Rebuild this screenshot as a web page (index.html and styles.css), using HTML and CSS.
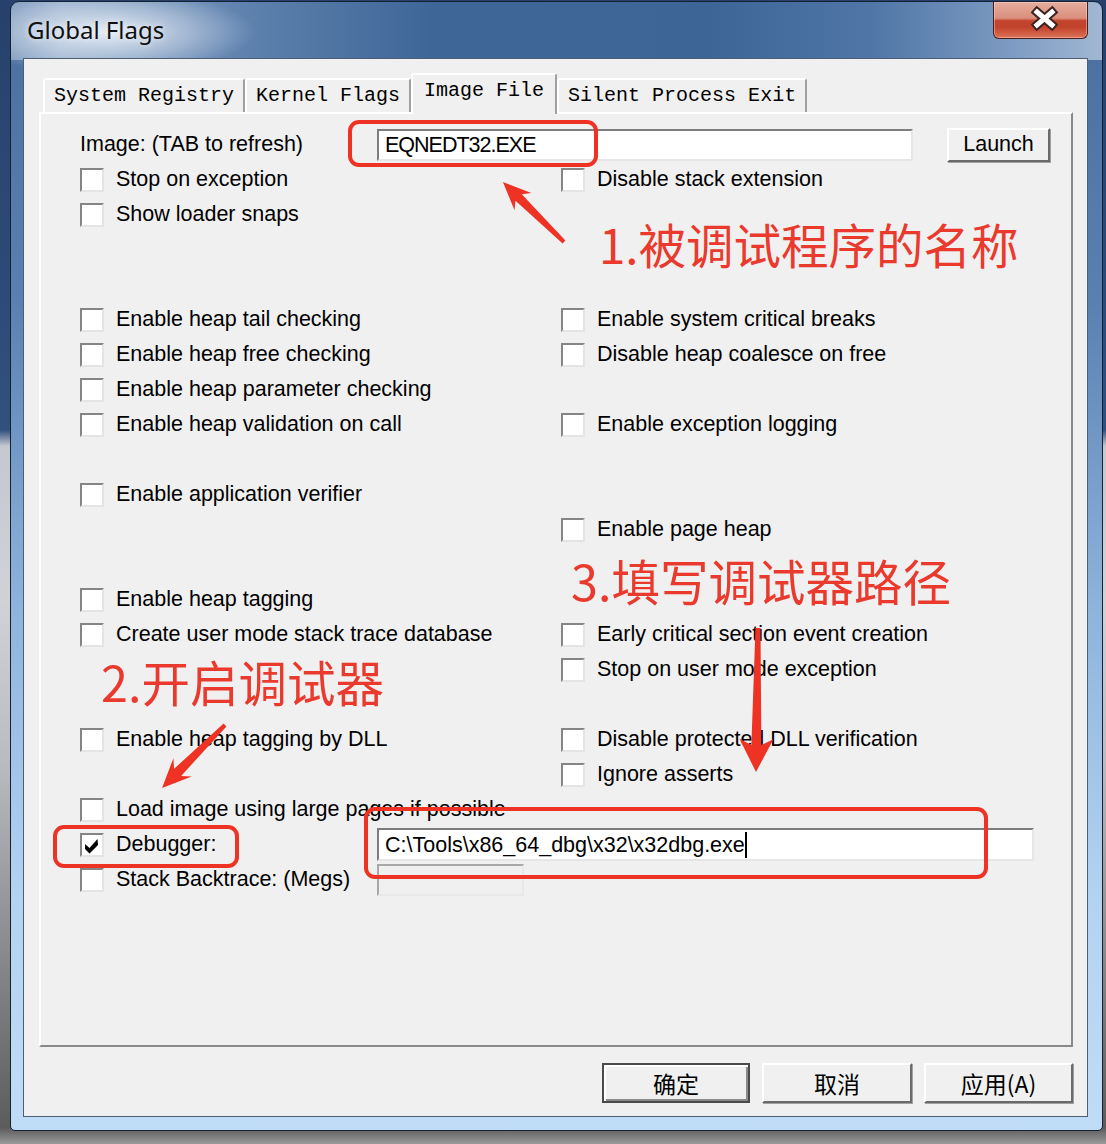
FILE: index.html
```html
<!DOCTYPE html>
<html lang="zh-CN">
<head>
<meta charset="utf-8">
<title>Global Flags</title>
<link rel="stylesheet" href="styles.css">
</head>
<body>
<div class="desktop">
  <div class="window">
    <div class="titlebar">
      <span class="title">Global Flags</span>
      <div class="close">
        <svg width="95" height="37" viewBox="0 0 95 37">
          <path d="M43 10 L58 23 M58 10 L43 23" stroke="#3b2322" stroke-width="9" stroke-linecap="square" fill="none"/>
          <path d="M43 10 L58 23 M58 10 L43 23" stroke="#ffffff" stroke-width="5" stroke-linecap="square" fill="none"/>
        </svg>
      </div>
    </div>
    <div class="client">
      <div class="tabs">
        <div class="tab">System Registry</div>
        <div class="tab">Kernel Flags</div>
        <div class="tab sel">Image File</div>
        <div class="tab">Silent Process Exit</div>
      </div>
      <div class="panel">
        <div class="row">
          <div class="label c1">Image: (TAB to refresh)</div>
          <div class="imgctl">
            <div class="edit img">EQNEDT32.EXE</div>
            <div class="btn launch">Launch</div>
          </div>
        </div>
        <div class="row">
          <div class="cb l"><span class="box"></span>Stop on exception</div>
          <div class="cb r"><span class="box"></span>Disable stack extension</div>
        </div>
        <div class="row">
          <div class="cb l"><span class="box"></span>Show loader snaps</div>
        </div>
        <div class="row"></div>
        <div class="row"></div>
        <div class="row">
          <div class="cb l"><span class="box"></span>Enable heap tail checking</div>
          <div class="cb r"><span class="box"></span>Enable system critical breaks</div>
        </div>
        <div class="row">
          <div class="cb l"><span class="box"></span>Enable heap free checking</div>
          <div class="cb r"><span class="box"></span>Disable heap coalesce on free</div>
        </div>
        <div class="row">
          <div class="cb l"><span class="box"></span>Enable heap parameter checking</div>
        </div>
        <div class="row">
          <div class="cb l"><span class="box"></span>Enable heap validation on call</div>
          <div class="cb r"><span class="box"></span>Enable exception logging</div>
        </div>
        <div class="row"></div>
        <div class="row">
          <div class="cb l"><span class="box"></span>Enable application verifier</div>
        </div>
        <div class="row">
          <div class="cb r"><span class="box"></span>Enable page heap</div>
        </div>
        <div class="row"></div>
        <div class="row">
          <div class="cb l"><span class="box"></span>Enable heap tagging</div>
        </div>
        <div class="row">
          <div class="cb l"><span class="box"></span>Create user mode stack trace database</div>
          <div class="cb r"><span class="box"></span>Early critical section event creation</div>
        </div>
        <div class="row">
          <div class="cb r"><span class="box"></span>Stop on user mode exception</div>
        </div>
        <div class="row"></div>
        <div class="row">
          <div class="cb l"><span class="box"></span>Enable heap tagging by DLL</div>
          <div class="cb r"><span class="box"></span>Disable protected DLL verification</div>
        </div>
        <div class="row">
          <div class="cb r"><span class="box"></span>Ignore asserts</div>
        </div>
        <div class="row">
          <div class="cb l"><span class="box"></span>Load image using large pages if possible</div>
        </div>
        <div class="row">
          <div class="cb c1"><span class="box"><svg width="20" height="20" viewBox="0 0 20 20"><polygon points="3,9 7.5,13 15.5,4 16,10 7.5,18.5 3,14" fill="#000"/></svg></span>Debugger:</div>
          <div class="edit dbg">C:\Tools\x86_64_dbg\x32\x32dbg.exe<span class="caret"></span></div>
        </div>
        <div class="row">
          <div class="cb c1"><span class="box"></span>Stack Backtrace: (Megs)</div>
          <div class="edit stack"></div>
        </div>
      </div>
      <div class="actions">
        <div class="btn act ok">确定</div>
        <div class="btn act cancel">取消</div>
        <div class="btn act apply">应用(A)</div>
      </div>
    </div>
  </div>

  <div class="mark mark1"></div>
  <div class="mark mark2"></div>
  <div class="mark mark3"></div>
  <div class="note note1">1.被调试程序的名称</div>
  <div class="note note2">2.开启调试器</div>
  <div class="note note3">3.填写调试器路径</div>
  <svg class="arrows" width="1106" height="1144" viewBox="0 0 1106 1144">
    <g fill="#ee3325">
      <polygon transform="translate(564 242) rotate(-135.5)" points="0,-2 63.6,-4.5 57.6,-12 85.6,0 57.6,12 63.6,4.5 0,2"/>
      <polygon transform="translate(225 725) rotate(135)" points="0,-2 67,-5 60,-13 89,0 60,13 67,5 0,2"/>
      <polygon transform="translate(758 628) rotate(90.8)" points="0,-2.5 117,-5 111,-17 144,0 111,17 117,5 0,2.5"/>
    </g>
  </svg>
</div>
</body>
</html>
```

FILE: styles.css
```css
* { box-sizing: border-box; }

html, body {
  margin: 0;
  padding: 0;
}

body {
  width: 1106px;
  height: 1144px;
  overflow: hidden;
  font-family: "Liberation Sans", Arial, sans-serif;
  color: #000;
}

.desktop {
  position: relative;
  width: 1106px;
  height: 1144px;
  padding: 1px 3px 13px 10px;
  background: linear-gradient(180deg, #27416c 0, #30507e 430px, #c4c8cf 446px, #d0d2d6 600px, #b9bcc2 760px, #5c5c5c 1128px, #9a9a9a 1144px);
}

.window {
  width: 1093px;
  height: 1130px;
  border: 1px solid #142131;
  border-radius: 9px 9px 5px 5px;
  display: flex;
  flex-direction: column;
  padding: 0 14px 13px 12px;
  background:
    radial-gradient(ellipse 150px 42px at 95px 30px, rgba(232, 238, 246, 0.95), rgba(232, 238, 246, 0)),
    linear-gradient(90deg, #7f9bbe 0, #93accb 50px, #5f82ae 230px, #3e6697 420px, #3d6596 700px, #4f76a6 860px, #7d9bc2 1000px, #a2b8d4 1093px) 0 0 / 100% 58px no-repeat,
    linear-gradient(180deg, #4a6e9e 0, #5a80b1 300px, #8db3dc 600px, #b3d3f2 900px, #c0dcf7 1130px);
}

.titlebar {
  height: 56px;
  margin: 0 -14px 0 -12px;
  padding-left: 16px;
  display: flex;
  justify-content: space-between;
  align-items: flex-start;
  flex: none;
}

.title {
  font-family: "Noto Sans", "Open Sans", sans-serif;
  font-size: 24px;
  line-height: 56px;
  color: #111;
  text-shadow: 0 0 6px rgba(255, 255, 255, 0.8);
}

.close {
  width: 95px;
  height: 37px;
  margin-right: 14px;
  border: 1px solid #4a1d1a;
  border-top: none;
  border-radius: 0 0 6px 6px;
  background: linear-gradient(180deg, #e6ad9e 0, #da8f7d 45%, #c2442d 52%, #c2432c 70%, #dc7457 100%);
  box-shadow: inset 0 0 0 1px rgba(255, 220, 210, 0.45);
}

.close svg { display: block; }

.client {
  flex: 1;
  background: #f0f0f0;
  border: 1px solid #4d5f75;
  padding: 14px 14px 0 15px;
  display: flex;
  flex-direction: column;
}

.tabs {
  display: flex;
  align-items: flex-end;
  height: 39px;
  margin-left: 4px;
  position: relative;
  z-index: 1;
  flex: none;
}

.tab {
  height: 34px;
  padding: 0 9px;
  border: 2px solid;
  border-bottom: none;
  border-color: #ffffff #a0a0a0 transparent #ffffff;
  border-radius: 3px 3px 0 0;
  background: #f0f0f0;
  font-family: "Liberation Mono", "Courier New", monospace;
  font-size: 20px;
  line-height: 32px;
  white-space: nowrap;
}

.tab.sel {
  height: 41px;
  padding: 0 11px;
  margin-bottom: -2px;
}

.panel {
  height: 935px;
  border: 2px solid;
  border-color: #ffffff #898989 #898989 #ffffff;
  padding: 13px 0 0 39px;
  flex: none;
}

.row {
  display: grid;
  grid-template-columns: 297px 184px 489px;
  height: 35px;
  align-items: center;
}

.l { grid-column: 1 / 3; }
.r { grid-column: 3; }
.c1 { grid-column: 1; }

.label, .cb {
  font-size: 21.5px;
  white-space: nowrap;
}

.cb {
  display: flex;
  align-items: center;
  gap: 12px;
}

.box {
  width: 24px;
  height: 24px;
  flex: none;
  background: #fff;
  border: 2px solid;
  border-color: #858585 #e4e4e4 #e4e4e4 #858585;
  display: flex;
  align-items: center;
  justify-content: center;
}

.box svg { display: block; }

.imgctl {
  grid-column: 2 / 4;
  display: flex;
  align-items: center;
}

.edit {
  background: #fff;
  border: 2px solid;
  border-color: #7d7d7d #e6e6e6 #e6e6e6 #7d7d7d;
  font-size: 21.5px;
  line-height: 28px;
  padding-left: 6px;
  white-space: nowrap;
  display: flex;
  align-items: center;
}

.edit.img {
  width: 536px;
  height: 32px;
  letter-spacing: -1px;
}

.edit.dbg {
  grid-column: 2 / 4;
  width: 657px;
  height: 33px;
}

.edit.stack {
  grid-column: 2;
  width: 147px;
  height: 32px;
  background: #f0f0f0;
  border-color: #a8a8a8 #e8e8e8 #e8e8e8 #a8a8a8;
}

.caret {
  display: inline-block;
  width: 2px;
  height: 26px;
  background: #000;
}

.btn {
  background: #f0f0f0;
  border: 2px solid;
  border-color: #ffffff #6a6a6a #6a6a6a #ffffff;
  box-shadow: 1px 1px 0 #a0a0a0;
  display: flex;
  align-items: center;
  justify-content: center;
  white-space: nowrap;
}

.launch {
  width: 103px;
  height: 34px;
  margin-left: 34px;
  font-size: 21.5px;
}

.actions {
  display: flex;
  justify-content: flex-end;
  gap: 12px;
  margin-top: 16px;
  flex: none;
}

.act {
  height: 40px;
  font-family: "Noto Sans CJK SC", sans-serif;
  font-size: 23px;
}

.ok {
  width: 148px;
  border-color: #4a4a4a;
  box-shadow: inset 2px 2px 0 #ffffff, inset -2px -2px 0 #8a8a8a;
}
.cancel { width: 150px; }
.apply { width: 149px; }

.mark {
  position: absolute;
  border: 4.5px solid #ee3325;
  border-radius: 11px;
}

.mark1 { left: 348px; top: 120px; width: 250px; height: 47px; }
.mark2 { left: 53px; top: 825px; width: 186px; height: 43px; }
.mark3 { left: 364px; top: 807px; width: 624px; height: 72px; }

.note {
  position: absolute;
  font-family: "Noto Sans CJK SC", sans-serif;
  font-size: 48.5px;
  line-height: 1;
  color: #ea3a2d;
  white-space: nowrap;
}

.note1 { left: 599px; top: 220px; font-size: 47.5px; }
.note2 { left: 101px; top: 657px; }
.note3 { left: 571px; top: 556px; }

.arrows {
  position: absolute;
  left: 0;
  top: 0;
  pointer-events: none;
}
```
